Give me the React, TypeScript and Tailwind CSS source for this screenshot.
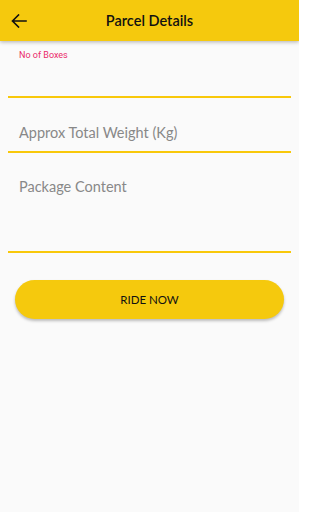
import React from "react";

export default function App() {
  return (
    <div className="w-[299px] h-[512px] bg-[#fafafa] flex flex-col overflow-hidden">
      <div className="h-[41px] bg-[#f5c90d] shadow-[0_1px_4px_rgba(0,0,0,0.3)] flex items-center relative z-10 shrink-0">
        <div className="w-[36px] flex items-center justify-center pl-[1px]">
          <svg width="16" height="14" viewBox="0 0 16 14" fill="none">
            <path d="M15 7H1.6M7.5 1L1.5 7L7.5 13" stroke="#111" strokeWidth="1.6" strokeLinecap="square" />
          </svg>
        </div>
        <div className="flex-1 text-center pr-[36px] text-[14.5px] font-semibold text-[#111] font-['Lato',sans-serif]">
          Parcel Details
        </div>
      </div>

      <div className="px-[8px] flex flex-col">
        <div className="h-[55px] flex flex-col">
          <div className="pt-[8px] pl-[11px] text-[9px] leading-[12px] text-[#ea2a6a] font-['Roboto',sans-serif]">No of Boxes</div>
        </div>
        <div className="h-[2px] bg-[#f8c80a]" />
        <div className="h-[53px] flex items-center pt-[16px]">
          <div className="pl-[11px] text-[14.5px] text-[#888888] font-['Lato',sans-serif]">Approx Total Weight (Kg)</div>
        </div>
        <div className="h-[2px] bg-[#f8c80a]" />
        <div className="h-[98px]">
          <div className="pt-[24px] pl-[11px] text-[14.5px] leading-[20px] text-[#888888] font-['Lato',sans-serif]">Package Content</div>
        </div>
        <div className="h-[2px] bg-[#f8c80a]" />
      </div>

      <div className="px-[15px] pt-[27px]">
        <button className="w-full h-[39px] rounded-full bg-[#f5c90d] shadow-[0_2px_3px_rgba(0,0,0,0.25)] text-[11.5px] text-[#111] font-['Lato',sans-serif] font-normal flex items-center justify-center">
          RIDE NOW
        </button>
      </div>
    </div>
  );
}
